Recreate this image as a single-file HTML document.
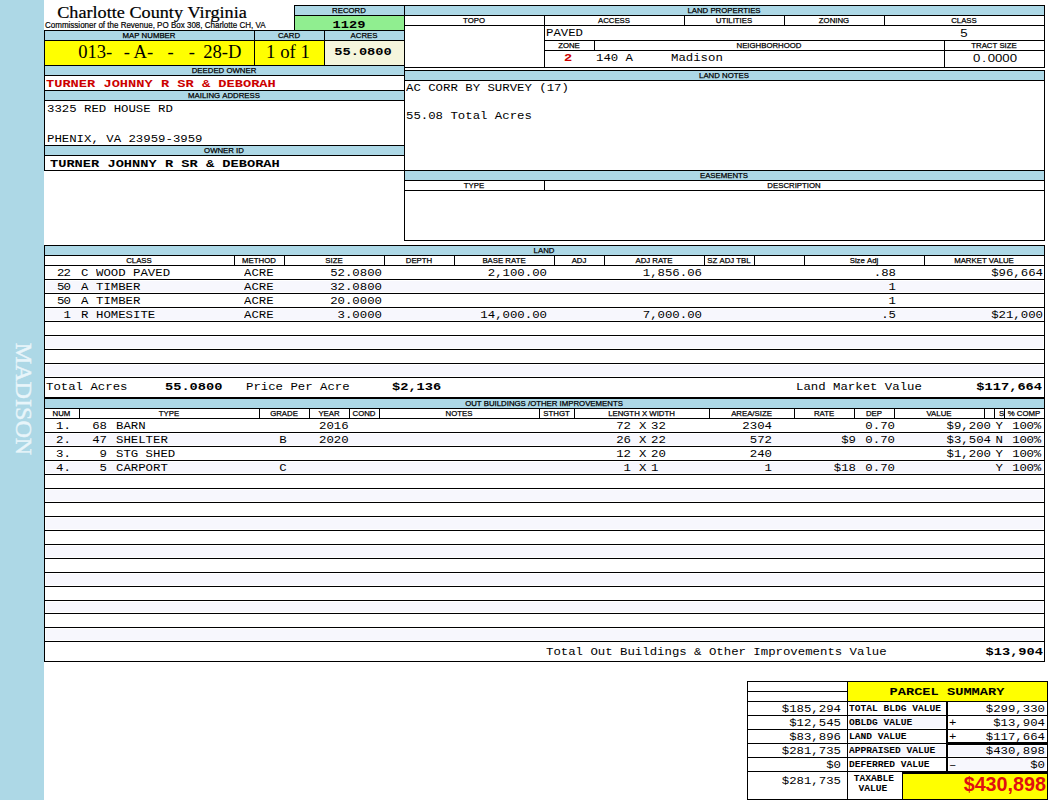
<!DOCTYPE html>
<html><head><meta charset="utf-8"><title>Charlotte County Virginia</title>
<style>
html,body{margin:0;padding:0;background:#fff;}
body{width:1050px;height:800px;position:relative;overflow:hidden;}
.b{position:absolute;box-sizing:border-box;}
.t{position:absolute;white-space:nowrap;color:#000;}
.lb{font:7.8px/10px "Liberation Sans",sans-serif;-webkit-text-stroke:0.25px #000;}
.sub{font:8.8px/10px "Liberation Sans",sans-serif;transform:scaleX(0.91);transform-origin:left;-webkit-text-stroke:0.2px #000;}
.title{font:16.9px/20px "Liberation Serif",serif;transform:scaleX(1.077);-webkit-text-stroke:0.2px #000;}
.big{font:18.6px/25px "Liberation Serif",serif;}
.m{font:11.2px/14px "Liberation Mono",monospace;transform:scaleX(1.103);}
.mb{font:bold 11.7px/14px "Liberation Mono",monospace;transform:scaleX(1.17);}
.ms{font:10.4px/14px "Liberation Sans",sans-serif;transform:scaleX(1.27);}
.ms span{display:inline-block;width:5.8px;text-align:center;}
.sm{font:bold 8.3px/14px "Liberation Mono",monospace;transform:scaleX(1.155);}
.code{letter-spacing:-0.8px;}
.red{color:#cc0000;}
.tot{font:bold 21px/27px "Liberation Sans",sans-serif;color:#e01010;transform:scaleX(0.94);transform-origin:right;}
.side{font:22.5px/30px "Liberation Serif",serif;color:#e8f5fa;-webkit-text-stroke:0.4px #e8f5fa;}
</style></head>
<body>
<div class="b" style="left:0px;top:0px;width:44px;height:800px;background:#add8e6"></div>
<div class="t side" style="left:-77.5px;top:384px;width:200px;text-align:center;transform:rotate(90deg) scaleX(1.072);">MADISON</div>
<div class="t title" style="left:-48px;width:400px;text-align:center;top:2.6px;">Charlotte&nbsp;County&nbsp;Virginia</div>
<div class="t sub" style="left:45px;top:20px;">Commissioner&nbsp;of&nbsp;the&nbsp;Revenue,&nbsp;PO&nbsp;Box&nbsp;308,&nbsp;Charlotte&nbsp;CH,&nbsp;VA</div>
<div class="b" style="left:294px;top:5px;width:111px;height:11px;background:#add8e6;border:1px solid #000;"></div>
<div class="b" style="left:294px;top:15px;width:111px;height:16px;background:#90ee90;border:1px solid #000;"></div>
<div class="t lb" style="left:149px;width:400px;text-align:center;top:6px;">RECORD</div>
<div class="t mb" style="left:148.5px;width:400px;text-align:center;top:17.5px;transform-origin:center;">1129</div>
<div class="b" style="left:44px;top:30px;width:361px;height:141px;background:#fff;border:1px solid #000;"></div>
<div class="b" style="left:45px;top:31px;width:359px;height:9px;background:#add8e6"></div>
<div class="b" style="left:44px;top:40px;width:361px;height:1px;background:#000"></div>
<div class="b" style="left:45px;top:41px;width:209px;height:24px;background:#ffff00"></div>
<div class="b" style="left:255px;top:41px;width:69px;height:24px;background:#ffff00"></div>
<div class="b" style="left:325px;top:41px;width:79px;height:24px;background:#f5f5dc"></div>
<div class="b" style="left:254px;top:30px;width:1px;height:36px;background:#000"></div>
<div class="b" style="left:324px;top:30px;width:1px;height:36px;background:#000"></div>
<div class="b" style="left:44px;top:65px;width:361px;height:1px;background:#000"></div>
<div class="b" style="left:45px;top:66px;width:359px;height:9px;background:#add8e6"></div>
<div class="b" style="left:44px;top:75px;width:361px;height:1px;background:#000"></div>
<div class="b" style="left:44px;top:90px;width:361px;height:1px;background:#000"></div>
<div class="b" style="left:45px;top:91px;width:359px;height:9px;background:#add8e6"></div>
<div class="b" style="left:44px;top:100px;width:361px;height:1px;background:#000"></div>
<div class="b" style="left:44px;top:145px;width:361px;height:1px;background:#000"></div>
<div class="b" style="left:45px;top:146px;width:359px;height:9px;background:#add8e6"></div>
<div class="b" style="left:44px;top:155px;width:361px;height:1px;background:#000"></div>
<div class="t lb" style="left:-51px;width:400px;text-align:center;top:31px;">MAP&nbsp;NUMBER</div>
<div class="t lb" style="left:89px;width:400px;text-align:center;top:31px;">CARD</div>
<div class="t lb" style="left:164px;width:400px;text-align:center;top:31px;">ACRES</div>
<div class="t big" style="left:78.2px;top:39px;">013-</div>
<div class="t big" style="left:123.7px;top:39px;">-</div>
<div class="t big" style="left:133.5px;top:39px;">A-</div>
<div class="t big" style="left:167.5px;top:39px;">-</div>
<div class="t big" style="left:188.7px;top:39px;">-</div>
<div class="t big" style="left:203.2px;top:39px;">28-D</div>
<div class="t big" style="left:88px;width:400px;text-align:center;top:39px;font-size:18.8px">1&nbsp;of&nbsp;1</div>
<div class="t mb" style="left:163px;width:400px;text-align:center;top:45px;transform-origin:center;">55.0800</div>
<div class="t lb" style="left:24px;width:400px;text-align:center;top:66px;">DEEDED&nbsp;OWNER</div>
<div class="t mb red" style="left:46px;top:77px;transform-origin:left;">TURNER&nbsp;JOHNNY&nbsp;R&nbsp;SR&nbsp;&amp;&nbsp;DEBORAH</div>
<div class="t lb" style="left:24px;width:400px;text-align:center;top:91px;">MAILING&nbsp;ADDRESS</div>
<div class="t m" style="left:47px;top:102px;transform-origin:left;">3325&nbsp;RED&nbsp;HOUSE&nbsp;RD</div>
<div class="t m" style="left:47px;top:132px;transform-origin:left;">PHENIX,&nbsp;VA&nbsp;23959-3959</div>
<div class="t lb" style="left:24px;width:400px;text-align:center;top:146px;">OWNER&nbsp;ID</div>
<div class="t mb" style="left:50px;top:157px;transform-origin:left;">TURNER&nbsp;JOHNNY&nbsp;R&nbsp;SR&nbsp;&amp;&nbsp;DEBORAH</div>
<div class="b" style="left:404px;top:5px;width:641px;height:63px;background:#fff;border:1px solid #000;"></div>
<div class="b" style="left:405px;top:6px;width:639px;height:9px;background:#add8e6"></div>
<div class="b" style="left:404px;top:15px;width:641px;height:1px;background:#000"></div>
<div class="b" style="left:404px;top:25px;width:641px;height:1px;background:#000"></div>
<div class="b" style="left:544px;top:15px;width:1px;height:11px;background:#000"></div>
<div class="b" style="left:684px;top:15px;width:1px;height:11px;background:#000"></div>
<div class="b" style="left:784px;top:15px;width:1px;height:11px;background:#000"></div>
<div class="b" style="left:884px;top:15px;width:1px;height:11px;background:#000"></div>
<div class="b" style="left:544px;top:25px;width:1px;height:43px;background:#000"></div>
<div class="b" style="left:544px;top:40px;width:501px;height:1px;background:#000"></div>
<div class="b" style="left:544px;top:50px;width:501px;height:1px;background:#000"></div>
<div class="b" style="left:594px;top:40px;width:1px;height:11px;background:#000"></div>
<div class="b" style="left:944px;top:40px;width:1px;height:28px;background:#000"></div>
<div class="t lb" style="left:524px;width:400px;text-align:center;top:6px;">LAND&nbsp;PROPERTIES</div>
<div class="t lb" style="left:274px;width:400px;text-align:center;top:16px;">TOPO</div>
<div class="t lb" style="left:414px;width:400px;text-align:center;top:16px;">ACCESS</div>
<div class="t lb" style="left:534px;width:400px;text-align:center;top:16px;">UTILITIES</div>
<div class="t lb" style="left:634px;width:400px;text-align:center;top:16px;">ZONING</div>
<div class="t lb" style="left:764px;width:400px;text-align:center;top:16px;">CLASS</div>
<div class="t m" style="left:546px;top:26px;transform-origin:left;">PAVED</div>
<div class="t ms" style="left:764px;width:400px;text-align:center;top:27px;">5</div>
<div class="t lb" style="left:369px;width:400px;text-align:center;top:41px;">ZONE</div>
<div class="t lb" style="left:569px;width:400px;text-align:center;top:41px;">NEIGHBORHOOD</div>
<div class="t lb" style="left:794px;width:400px;text-align:center;top:41px;">TRACT&nbsp;SIZE</div>
<div class="t mb red" style="left:368px;width:400px;text-align:center;top:51px;transform-origin:center;">2</div>
<div class="t m" style="left:596px;top:51px;transform-origin:left;">140&nbsp;A</div>
<div class="t m" style="left:671px;top:51px;transform-origin:left;">Madison</div>
<div class="t ms" style="left:795px;width:400px;text-align:center;top:52px;">0<span>.</span>0000</div>
<div class="b" style="left:404px;top:70px;width:641px;height:101px;background:#fff;border:1px solid #000;"></div>
<div class="b" style="left:405px;top:71px;width:639px;height:9px;background:#add8e6"></div>
<div class="b" style="left:404px;top:80px;width:641px;height:1px;background:#000"></div>
<div class="t lb" style="left:524px;width:400px;text-align:center;top:71px;">LAND&nbsp;NOTES</div>
<div class="t m" style="left:406px;top:81px;transform-origin:left;">AC&nbsp;CORR&nbsp;BY&nbsp;SURVEY&nbsp;(17)</div>
<div class="t m" style="left:406px;top:109px;transform-origin:left;">55.08&nbsp;Total&nbsp;Acres</div>
<div class="b" style="left:404px;top:170px;width:641px;height:71px;background:#fff;border:1px solid #000;"></div>
<div class="b" style="left:405px;top:171px;width:639px;height:9px;background:#add8e6"></div>
<div class="b" style="left:404px;top:180px;width:641px;height:1px;background:#000"></div>
<div class="b" style="left:404px;top:190px;width:641px;height:1px;background:#000"></div>
<div class="b" style="left:544px;top:180px;width:1px;height:11px;background:#000"></div>
<div class="t lb" style="left:524px;width:400px;text-align:center;top:171px;">EASEMENTS</div>
<div class="t lb" style="left:274px;width:400px;text-align:center;top:181px;">TYPE</div>
<div class="t lb" style="left:594px;width:400px;text-align:center;top:181px;">DESCRIPTION</div>
<div class="b" style="left:44px;top:245px;width:1001px;height:153px;background:#fff;border:1px solid #000;"></div>
<div class="b" style="left:45px;top:246px;width:999px;height:9px;background:#add8e6"></div>
<div class="b" style="left:44px;top:255px;width:1001px;height:1px;background:#000"></div>
<div class="b" style="left:44px;top:265px;width:1001px;height:1px;background:#000"></div>
<div class="b" style="left:234px;top:255px;width:1px;height:11px;background:#000"></div>
<div class="b" style="left:284px;top:255px;width:1px;height:11px;background:#000"></div>
<div class="b" style="left:384px;top:255px;width:1px;height:11px;background:#000"></div>
<div class="b" style="left:454px;top:255px;width:1px;height:11px;background:#000"></div>
<div class="b" style="left:554px;top:255px;width:1px;height:11px;background:#000"></div>
<div class="b" style="left:604px;top:255px;width:1px;height:11px;background:#000"></div>
<div class="b" style="left:704px;top:255px;width:1px;height:11px;background:#000"></div>
<div class="b" style="left:754px;top:255px;width:1px;height:11px;background:#000"></div>
<div class="b" style="left:804px;top:255px;width:1px;height:11px;background:#000"></div>
<div class="b" style="left:924px;top:255px;width:1px;height:11px;background:#000"></div>
<div class="t lb" style="left:344px;width:400px;text-align:center;top:246px;">LAND</div>
<div class="t lb" style="left:-61px;width:400px;text-align:center;top:256px;">CLASS</div>
<div class="t lb" style="left:59px;width:400px;text-align:center;top:256px;">METHOD</div>
<div class="t lb" style="left:134px;width:400px;text-align:center;top:256px;">SIZE</div>
<div class="t lb" style="left:219px;width:400px;text-align:center;top:256px;">DEPTH</div>
<div class="t lb" style="left:304px;width:400px;text-align:center;top:256px;">BASE&nbsp;RATE</div>
<div class="t lb" style="left:379px;width:400px;text-align:center;top:256px;">ADJ</div>
<div class="t lb" style="left:454px;width:400px;text-align:center;top:256px;">ADJ&nbsp;RATE</div>
<div class="t lb" style="left:529px;width:400px;text-align:center;top:256px;">SZ&nbsp;ADJ&nbsp;TBL</div>
<div class="t lb" style="left:664px;width:400px;text-align:center;top:256px;">Size&nbsp;Adj</div>
<div class="t lb" style="left:784px;width:400px;text-align:center;top:256px;">MARKET&nbsp;VALUE</div>
<div class="b" style="left:44px;top:279px;width:1001px;height:1px;background:#000"></div>
<div class="b" style="left:46px;top:281px;width:997px;height:11px;background:#f7f7fd"></div>
<div class="b" style="left:44px;top:293px;width:1001px;height:1px;background:#000"></div>
<div class="b" style="left:44px;top:307px;width:1001px;height:1px;background:#000"></div>
<div class="b" style="left:46px;top:309px;width:997px;height:11px;background:#f7f7fd"></div>
<div class="b" style="left:44px;top:321px;width:1001px;height:1px;background:#000"></div>
<div class="b" style="left:44px;top:335px;width:1001px;height:1px;background:#000"></div>
<div class="b" style="left:46px;top:337px;width:997px;height:11px;background:#f7f7fd"></div>
<div class="b" style="left:44px;top:349px;width:1001px;height:1px;background:#000"></div>
<div class="b" style="left:44px;top:363px;width:1001px;height:1px;background:#000"></div>
<div class="b" style="left:46px;top:365px;width:997px;height:11px;background:#f7f7fd"></div>
<div class="b" style="left:44px;top:377px;width:1001px;height:1px;background:#000"></div>
<div class="t m code" style="left:-330px;width:400px;text-align:right;top:266px;transform-origin:right;">22</div>
<div class="t m" style="left:81px;top:266px;transform-origin:left;">C</div>
<div class="t m" style="left:96px;top:266px;transform-origin:left;">WOOD&nbsp;PAVED</div>
<div class="t m" style="left:244px;top:266px;transform-origin:left;">ACRE</div>
<div class="t m" style="left:-18px;width:400px;text-align:right;top:266px;transform-origin:right;">52.0800</div>
<div class="t m" style="left:147px;width:400px;text-align:right;top:266px;transform-origin:right;">2,100.00</div>
<div class="t m" style="left:302px;width:400px;text-align:right;top:266px;transform-origin:right;">1,856.06</div>
<div class="t m" style="left:496px;width:400px;text-align:right;top:266px;transform-origin:right;">.88</div>
<div class="t m" style="left:643px;width:400px;text-align:right;top:266px;transform-origin:right;">$96,664</div>
<div class="t m code" style="left:-330px;width:400px;text-align:right;top:280px;transform-origin:right;">50</div>
<div class="t m" style="left:81px;top:280px;transform-origin:left;">A</div>
<div class="t m" style="left:96px;top:280px;transform-origin:left;">TIMBER</div>
<div class="t m" style="left:244px;top:280px;transform-origin:left;">ACRE</div>
<div class="t m" style="left:-18px;width:400px;text-align:right;top:280px;transform-origin:right;">32.0800</div>
<div class="t m" style="left:496px;width:400px;text-align:right;top:280px;transform-origin:right;">1</div>
<div class="t m code" style="left:-330px;width:400px;text-align:right;top:294px;transform-origin:right;">50</div>
<div class="t m" style="left:81px;top:294px;transform-origin:left;">A</div>
<div class="t m" style="left:96px;top:294px;transform-origin:left;">TIMBER</div>
<div class="t m" style="left:244px;top:294px;transform-origin:left;">ACRE</div>
<div class="t m" style="left:-18px;width:400px;text-align:right;top:294px;transform-origin:right;">20.0000</div>
<div class="t m" style="left:496px;width:400px;text-align:right;top:294px;transform-origin:right;">1</div>
<div class="t m code" style="left:-330px;width:400px;text-align:right;top:308px;transform-origin:right;">1</div>
<div class="t m" style="left:81px;top:308px;transform-origin:left;">R</div>
<div class="t m" style="left:96px;top:308px;transform-origin:left;">HOMESITE</div>
<div class="t m" style="left:244px;top:308px;transform-origin:left;">ACRE</div>
<div class="t m" style="left:-18px;width:400px;text-align:right;top:308px;transform-origin:right;">3.0000</div>
<div class="t m" style="left:147px;width:400px;text-align:right;top:308px;transform-origin:right;">14,000.00</div>
<div class="t m" style="left:302px;width:400px;text-align:right;top:308px;transform-origin:right;">7,000.00</div>
<div class="t m" style="left:496px;width:400px;text-align:right;top:308px;transform-origin:right;">.5</div>
<div class="t m" style="left:643px;width:400px;text-align:right;top:308px;transform-origin:right;">$21,000</div>
<div class="t m" style="left:46px;top:378px;transform-origin:left;line-height:19px">Total&nbsp;Acres</div>
<div class="t mb" style="left:165px;top:378px;transform-origin:left;line-height:19px">55.0800</div>
<div class="t m" style="left:246px;top:378px;transform-origin:left;line-height:19px">Price&nbsp;Per&nbsp;Acre</div>
<div class="t mb" style="left:392px;top:378px;transform-origin:left;line-height:19px">$2,136</div>
<div class="t m" style="left:796px;top:378px;transform-origin:left;line-height:19px">Land&nbsp;Market&nbsp;Value</div>
<div class="t mb" style="left:642px;width:400px;text-align:right;top:378px;transform-origin:right;line-height:19px">$117,664</div>
<div class="b" style="left:44px;top:398px;width:1001px;height:264px;background:#fff;border:1px solid #000;"></div>
<div class="b" style="left:45px;top:399px;width:999px;height:9px;background:#add8e6"></div>
<div class="b" style="left:44px;top:408px;width:1001px;height:1px;background:#000"></div>
<div class="b" style="left:44px;top:418px;width:1001px;height:1px;background:#000"></div>
<div class="b" style="left:79px;top:408px;width:1px;height:11px;background:#000"></div>
<div class="b" style="left:259px;top:408px;width:1px;height:11px;background:#000"></div>
<div class="b" style="left:309px;top:408px;width:1px;height:11px;background:#000"></div>
<div class="b" style="left:349px;top:408px;width:1px;height:11px;background:#000"></div>
<div class="b" style="left:379px;top:408px;width:1px;height:11px;background:#000"></div>
<div class="b" style="left:539px;top:408px;width:1px;height:11px;background:#000"></div>
<div class="b" style="left:574px;top:408px;width:1px;height:11px;background:#000"></div>
<div class="b" style="left:709px;top:408px;width:1px;height:11px;background:#000"></div>
<div class="b" style="left:794px;top:408px;width:1px;height:11px;background:#000"></div>
<div class="b" style="left:854px;top:408px;width:1px;height:11px;background:#000"></div>
<div class="b" style="left:894px;top:408px;width:1px;height:11px;background:#000"></div>
<div class="b" style="left:984px;top:408px;width:1px;height:11px;background:#000"></div>
<div class="b" style="left:994px;top:408px;width:1px;height:11px;background:#000"></div>
<div class="b" style="left:1004px;top:408px;width:1px;height:11px;background:#000"></div>
<div class="t lb" style="left:344px;width:400px;text-align:center;top:399px;">OUT&nbsp;BUILDINGS&nbsp;/OTHER&nbsp;IMPROVEMENTS</div>
<div class="t lb" style="left:-138.5px;width:400px;text-align:center;top:409px;">NUM</div>
<div class="t lb" style="left:-31.0px;width:400px;text-align:center;top:409px;">TYPE</div>
<div class="t lb" style="left:84.0px;width:400px;text-align:center;top:409px;">GRADE</div>
<div class="t lb" style="left:129.0px;width:400px;text-align:center;top:409px;">YEAR</div>
<div class="t lb" style="left:164.0px;width:400px;text-align:center;top:409px;">COND</div>
<div class="t lb" style="left:259.0px;width:400px;text-align:center;top:409px;">NOTES</div>
<div class="t lb" style="left:356.5px;width:400px;text-align:center;top:409px;">STHGT</div>
<div class="t lb" style="left:441.5px;width:400px;text-align:center;top:409px;">LENGTH&nbsp;X&nbsp;WIDTH</div>
<div class="t lb" style="left:551.5px;width:400px;text-align:center;top:409px;">AREA/SIZE</div>
<div class="t lb" style="left:624.0px;width:400px;text-align:center;top:409px;">RATE</div>
<div class="t lb" style="left:674.0px;width:400px;text-align:center;top:409px;">DEP</div>
<div class="t lb" style="left:739.0px;width:400px;text-align:center;top:409px;">VALUE</div>
<div class="t lb" style="left:604.3px;width:400px;text-align:right;top:409px;">S</div>
<div class="t lb" style="left:824.0px;width:400px;text-align:center;top:409px;">%&nbsp;COMP</div>
<div class="b" style="left:44px;top:432px;width:1001px;height:1px;background:#000"></div>
<div class="b" style="left:46px;top:434px;width:997px;height:11px;background:#f7f7fd"></div>
<div class="b" style="left:44px;top:446px;width:1001px;height:1px;background:#000"></div>
<div class="b" style="left:44px;top:460px;width:1001px;height:1px;background:#000"></div>
<div class="b" style="left:46px;top:462px;width:997px;height:11px;background:#f7f7fd"></div>
<div class="b" style="left:44px;top:474px;width:1001px;height:1px;background:#000"></div>
<div class="b" style="left:44px;top:488px;width:1001px;height:1px;background:#000"></div>
<div class="b" style="left:46px;top:490px;width:997px;height:11px;background:#f7f7fd"></div>
<div class="b" style="left:44px;top:502px;width:1001px;height:1px;background:#000"></div>
<div class="b" style="left:44px;top:516px;width:1001px;height:1px;background:#000"></div>
<div class="b" style="left:46px;top:518px;width:997px;height:11px;background:#f7f7fd"></div>
<div class="b" style="left:44px;top:530px;width:1001px;height:1px;background:#000"></div>
<div class="b" style="left:44px;top:544px;width:1001px;height:1px;background:#000"></div>
<div class="b" style="left:46px;top:546px;width:997px;height:11px;background:#f7f7fd"></div>
<div class="b" style="left:44px;top:558px;width:1001px;height:1px;background:#000"></div>
<div class="b" style="left:44px;top:572px;width:1001px;height:1px;background:#000"></div>
<div class="b" style="left:46px;top:574px;width:997px;height:11px;background:#f7f7fd"></div>
<div class="b" style="left:44px;top:586px;width:1001px;height:1px;background:#000"></div>
<div class="b" style="left:44px;top:600px;width:1001px;height:1px;background:#000"></div>
<div class="b" style="left:46px;top:602px;width:997px;height:10px;background:#f7f7fd"></div>
<div class="b" style="left:44px;top:613px;width:1001px;height:1px;background:#000"></div>
<div class="b" style="left:44px;top:627px;width:1001px;height:1px;background:#000"></div>
<div class="b" style="left:46px;top:629px;width:997px;height:11px;background:#f7f7fd"></div>
<div class="b" style="left:44px;top:641px;width:1001px;height:1px;background:#000"></div>
<div class="t m" style="left:56px;top:419px;transform-origin:left;">1.</div>
<div class="t m" style="left:-293px;width:400px;text-align:right;top:419px;transform-origin:right;">68</div>
<div class="t m" style="left:116px;top:419px;transform-origin:left;">BARN</div>
<div class="t m" style="left:319px;top:419px;transform-origin:left;">2016</div>
<div class="t m" style="left:231.29999999999995px;width:400px;text-align:right;top:419px;transform-origin:right;">72</div>
<div class="t m" style="left:638.7px;top:419px;transform-origin:left;">X</div>
<div class="t m" style="left:651px;top:419px;transform-origin:left;">32</div>
<div class="t m" style="left:372px;width:400px;text-align:right;top:419px;transform-origin:right;">2304</div>
<div class="t m" style="left:495px;width:400px;text-align:right;top:419px;transform-origin:right;">0.70</div>
<div class="t m" style="left:591px;width:400px;text-align:right;top:419px;transform-origin:right;">$9,200</div>
<div class="t m" style="left:603px;width:400px;text-align:right;top:419px;transform-origin:right;">Y</div>
<div class="t m" style="left:640.7px;width:400px;text-align:right;top:419px;transform-origin:right;letter-spacing:-0.2px">100%</div>
<div class="t m" style="left:56px;top:433px;transform-origin:left;">2.</div>
<div class="t m" style="left:-293px;width:400px;text-align:right;top:433px;transform-origin:right;">47</div>
<div class="t m" style="left:116px;top:433px;transform-origin:left;">SHELTER</div>
<div class="t m" style="left:83px;width:400px;text-align:center;top:433px;transform-origin:center;">B</div>
<div class="t m" style="left:319px;top:433px;transform-origin:left;">2020</div>
<div class="t m" style="left:231.29999999999995px;width:400px;text-align:right;top:433px;transform-origin:right;">26</div>
<div class="t m" style="left:638.7px;top:433px;transform-origin:left;">X</div>
<div class="t m" style="left:651px;top:433px;transform-origin:left;">22</div>
<div class="t m" style="left:372px;width:400px;text-align:right;top:433px;transform-origin:right;">572</div>
<div class="t m" style="left:456px;width:400px;text-align:right;top:433px;transform-origin:right;">$9</div>
<div class="t m" style="left:495px;width:400px;text-align:right;top:433px;transform-origin:right;">0.70</div>
<div class="t m" style="left:591px;width:400px;text-align:right;top:433px;transform-origin:right;">$3,504</div>
<div class="t m" style="left:603px;width:400px;text-align:right;top:433px;transform-origin:right;">N</div>
<div class="t m" style="left:640.7px;width:400px;text-align:right;top:433px;transform-origin:right;letter-spacing:-0.2px">100%</div>
<div class="t m" style="left:56px;top:447px;transform-origin:left;">3.</div>
<div class="t m" style="left:-293px;width:400px;text-align:right;top:447px;transform-origin:right;">9</div>
<div class="t m" style="left:116px;top:447px;transform-origin:left;">STG&nbsp;SHED</div>
<div class="t m" style="left:231.29999999999995px;width:400px;text-align:right;top:447px;transform-origin:right;">12</div>
<div class="t m" style="left:638.7px;top:447px;transform-origin:left;">X</div>
<div class="t m" style="left:651px;top:447px;transform-origin:left;">20</div>
<div class="t m" style="left:372px;width:400px;text-align:right;top:447px;transform-origin:right;">240</div>
<div class="t m" style="left:591px;width:400px;text-align:right;top:447px;transform-origin:right;">$1,200</div>
<div class="t m" style="left:603px;width:400px;text-align:right;top:447px;transform-origin:right;">Y</div>
<div class="t m" style="left:640.7px;width:400px;text-align:right;top:447px;transform-origin:right;letter-spacing:-0.2px">100%</div>
<div class="t m" style="left:56px;top:461px;transform-origin:left;">4.</div>
<div class="t m" style="left:-293px;width:400px;text-align:right;top:461px;transform-origin:right;">5</div>
<div class="t m" style="left:116px;top:461px;transform-origin:left;">CARPORT</div>
<div class="t m" style="left:83px;width:400px;text-align:center;top:461px;transform-origin:center;">C</div>
<div class="t m" style="left:231.29999999999995px;width:400px;text-align:right;top:461px;transform-origin:right;">1</div>
<div class="t m" style="left:638.7px;top:461px;transform-origin:left;">X</div>
<div class="t m" style="left:651px;top:461px;transform-origin:left;">1</div>
<div class="t m" style="left:372px;width:400px;text-align:right;top:461px;transform-origin:right;">1</div>
<div class="t m" style="left:456px;width:400px;text-align:right;top:461px;transform-origin:right;">$18</div>
<div class="t m" style="left:495px;width:400px;text-align:right;top:461px;transform-origin:right;">0.70</div>
<div class="t m" style="left:603px;width:400px;text-align:right;top:461px;transform-origin:right;">Y</div>
<div class="t m" style="left:640.7px;width:400px;text-align:right;top:461px;transform-origin:right;letter-spacing:-0.2px">100%</div>
<div class="t m" style="left:546px;top:643px;transform-origin:left;line-height:18px">Total&nbsp;Out&nbsp;Buildings&nbsp;&amp;&nbsp;Other&nbsp;Improvements&nbsp;Value</div>
<div class="t mb" style="left:642.5px;width:400px;text-align:right;top:643px;transform-origin:right;line-height:18px">$13,904</div>
<div class="b" style="left:747px;top:681px;width:301px;height:119px;background:#fff;border:1px solid #000;"></div>
<div class="b" style="left:848px;top:682px;width:199px;height:19px;background:#ffff00"></div>
<div class="b" style="left:847px;top:681px;width:1px;height:119px;background:#000"></div>
<div class="t mb" style="left:747px;width:400px;text-align:center;top:684.5px;transform-origin:center;">PARCEL&nbsp;SUMMARY</div>
<div class="b" style="left:747px;top:691px;width:101px;height:1px;background:#000"></div>
<div class="b" style="left:747px;top:701px;width:301px;height:1px;background:#000"></div>
<div class="b" style="left:747px;top:715px;width:301px;height:1px;background:#000"></div>
<div class="b" style="left:747px;top:729px;width:301px;height:1px;background:#000"></div>
<div class="b" style="left:747px;top:743px;width:301px;height:1px;background:#000"></div>
<div class="b" style="left:747px;top:757px;width:301px;height:1px;background:#000"></div>
<div class="b" style="left:747px;top:771px;width:301px;height:1px;background:#000"></div>
<div class="b" style="left:849px;top:717px;width:96px;height:11px;background:#f7f7fd"></div>
<div class="b" style="left:849px;top:745px;width:96px;height:11px;background:#f7f7fd"></div>
<div class="b" style="left:949px;top:746px;width:97px;height:10px;background:#f7f7fd"></div>
<div class="b" style="left:949px;top:759px;width:97px;height:11px;background:#f7f7fd"></div>
<div class="b" style="left:946px;top:701px;width:2px;height:71px;background:#000"></div>
<div class="t m" style="left:441px;width:400px;text-align:right;top:702px;transform-origin:right;">$185,294</div>
<div class="t sm" style="left:849px;top:702px;transform-origin:left;">TOTAL&nbsp;BLDG&nbsp;VALUE</div>
<div class="t m" style="left:645px;width:400px;text-align:right;top:702px;transform-origin:right;">$299,330</div>
<div class="t m" style="left:441px;width:400px;text-align:right;top:716px;transform-origin:right;">$12,545</div>
<div class="t sm" style="left:849px;top:716px;transform-origin:left;">OBLDG&nbsp;VALUE</div>
<div class="t m" style="left:645px;width:400px;text-align:right;top:716px;transform-origin:right;">$13,904</div>
<div class="t m" style="left:949px;top:716px;transform-origin:left;">+</div>
<div class="t m" style="left:441px;width:400px;text-align:right;top:730px;transform-origin:right;">$83,896</div>
<div class="t sm" style="left:849px;top:730px;transform-origin:left;">LAND&nbsp;VALUE</div>
<div class="t m" style="left:645px;width:400px;text-align:right;top:730px;transform-origin:right;">$117,664</div>
<div class="t m" style="left:949px;top:730px;transform-origin:left;">+</div>
<div class="t m" style="left:441px;width:400px;text-align:right;top:744px;transform-origin:right;">$281,735</div>
<div class="t sm" style="left:849px;top:744px;transform-origin:left;">APPRAISED&nbsp;VALUE</div>
<div class="t m" style="left:645px;width:400px;text-align:right;top:744px;transform-origin:right;">$430,898</div>
<div class="t m" style="left:441px;width:400px;text-align:right;top:758px;transform-origin:right;">$0</div>
<div class="t sm" style="left:849px;top:758px;transform-origin:left;">DEFERRED&nbsp;VALUE</div>
<div class="t m" style="left:645px;width:400px;text-align:right;top:758px;transform-origin:right;">$0</div>
<div class="t m" style="left:949px;top:758px;transform-origin:left;">–</div>
<div class="b" style="left:946px;top:742px;width:102px;height:3px;background:#000"></div>
<div class="t m" style="left:441px;width:400px;text-align:right;top:774px;transform-origin:right;">$281,735</div>
<div class="t sm" style="left:673.7px;width:400px;text-align:center;top:774px;transform-origin:center;line-height:10px">TAXABLE</div>
<div class="t sm" style="left:673.3px;width:400px;text-align:center;top:784px;transform-origin:center;line-height:10px">VALUE</div>
<div class="b" style="left:903px;top:772px;width:144px;height:27px;background:#ffff00"></div>
<div class="b" style="left:902px;top:771px;width:1px;height:29px;background:#000"></div>
<div class="b" style="left:902px;top:771px;width:146px;height:3px;background:#000"></div>
<div class="t tot" style="left:645.5px;width:400px;text-align:right;top:770px;">$430,898</div>
</body></html>
